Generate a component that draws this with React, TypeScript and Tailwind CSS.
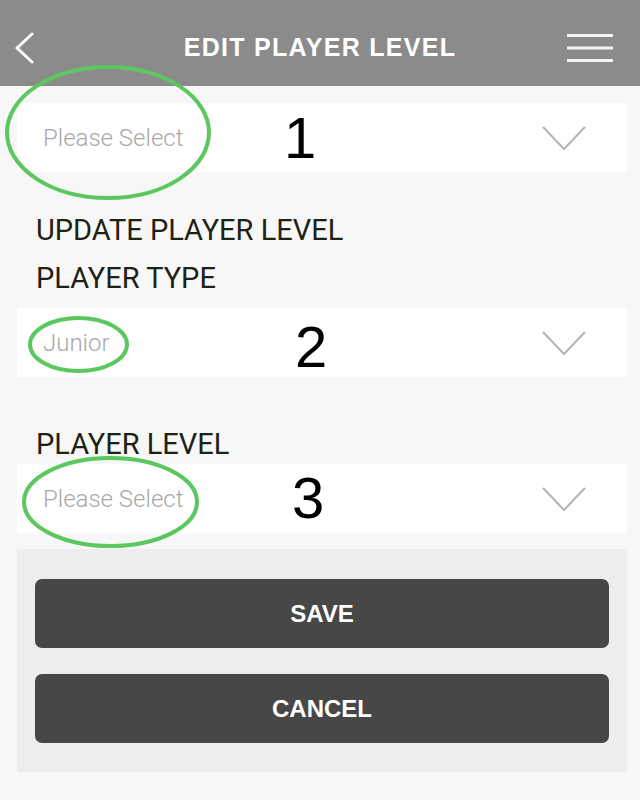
import React from 'react';

// ── Icons ────────────────────────────────────────────────────────────────────

function BackIcon() {
  return (
    <svg width="22" height="32" viewBox="0 0 22 32" fill="none">
      <polyline points="19,2 4,16 19,30" stroke="#ffffff" strokeWidth="3" strokeLinecap="round" strokeLinejoin="round" />
    </svg>
  );
}

function MenuIcon() {
  return (
    <svg width="46" height="28" viewBox="0 0 46 28" fill="none">
      <rect x="0" y="0" width="46" height="3" fill="#f4f4f4" />
      <rect x="0" y="12.5" width="46" height="3" fill="#f4f4f4" />
      <rect x="0" y="25" width="46" height="3" fill="#f4f4f4" />
    </svg>
  );
}

function ChevronDown() {
  return (
    <svg width="44" height="24" viewBox="0 0 44 24" fill="none">
      <polyline points="1,1 22,23 43,1" stroke="#b3b3b3" strokeWidth="2" />
    </svg>
  );
}

// ── Pieces ───────────────────────────────────────────────────────────────────

function SelectRow({ value }: { value: string }) {
  return (
    <div className="ml-[17px] mr-[13px] h-[69px] bg-white flex items-center justify-between pl-[26px] pr-[41px]">
      <span className="text-[24px] font-light text-[#a8a8a8] font-['Roboto',sans-serif]">{value}</span>
      <ChevronDown />
    </div>
  );
}

function ActionButton({ label }: { label: string }) {
  return (
    <button className="w-full h-[69px] rounded-[7px] bg-[#474747] text-white text-[24px] font-bold font-['Liberation_Sans',Arial,sans-serif]">
      {label}
    </button>
  );
}

// ── Page ─────────────────────────────────────────────────────────────────────

export default function App() {
  return (
    <div className="relative w-[640px] h-[800px] overflow-hidden bg-[#f7f7f7]">
      {/* Header */}
      <div className="h-[86px] bg-[#8b8b8b] grid grid-cols-[1fr_auto_1fr] items-center pt-[10px] px-[13px]">
        <div className="flex items-center">
          <BackIcon />
        </div>
        <h1 className="text-white text-[25px] font-bold tracking-[1.3px] font-['Liberation_Sans',Arial,sans-serif]">
          EDIT PLAYER LEVEL
        </h1>
        <div className="flex justify-end pr-[14px]">
          <MenuIcon />
        </div>
      </div>

      {/* Form */}
      <div className="pt-[17px]">
        <SelectRow value="Please Select" />

        <div className="mt-[34px] pl-[36px] text-[29px] leading-[48px] font-normal text-[#1d2212] font-['Roboto',sans-serif]">
          <p>UPDATE PLAYER LEVEL</p>
          <p>PLAYER TYPE</p>
        </div>

        <div className="mt-[6px]">
          <SelectRow value="Junior" />
        </div>

        <p className="mt-[47px] pl-[36px] text-[29px] leading-[40px] font-normal text-[#1d2212] font-['Roboto',sans-serif]">
          PLAYER LEVEL
        </p>

        <SelectRow value="Please Select" />

        {/* Buttons */}
        <div className="mt-[16px] ml-[17px] mr-[13px] bg-[#ededed] px-[18px] pt-[30px] pb-[29px] flex flex-col gap-[26px]">
          <ActionButton label="SAVE" />
          <ActionButton label="CANCEL" />
        </div>
      </div>

      {/* Annotations drawn over the screenshot */}
      <svg className="absolute inset-0 pointer-events-none" width="640" height="800" viewBox="0 0 640 800" fill="none">
        <ellipse cx="108" cy="132.5" rx="101" ry="65.5" stroke="#5cc75f" strokeWidth="4" />
        <ellipse cx="78.5" cy="344.5" rx="48.5" ry="26.5" stroke="#5cc75f" strokeWidth="4" />
        <ellipse cx="110.5" cy="502" rx="86.5" ry="44" stroke="#5cc75f" strokeWidth="4" />
      </svg>
      <span className="absolute left-[284px] top-[109px] text-[58px] leading-none text-black font-['Liberation_Sans',Arial,sans-serif]">1</span>
      <span className="absolute left-[295px] top-[318px] text-[58px] leading-none text-black font-['Liberation_Sans',Arial,sans-serif]">2</span>
      <span className="absolute left-[292px] top-[469px] text-[58px] leading-none text-black font-['Liberation_Sans',Arial,sans-serif]">3</span>
    </div>
  );
}
